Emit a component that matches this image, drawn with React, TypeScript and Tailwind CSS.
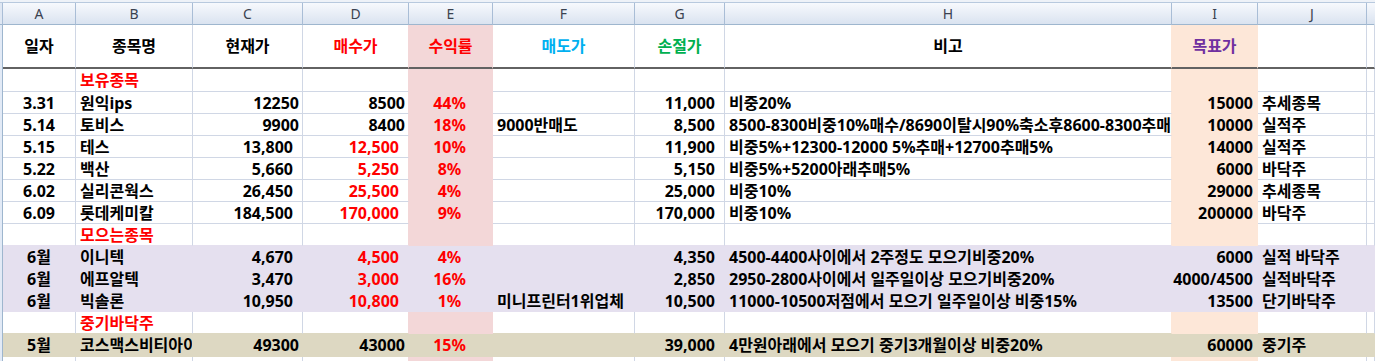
import React from "react";

type Fill = "w" | "p" | "o" | "l" | "t";

const BG: Record<Fill, string> = {
  w: "bg-white",
  p: "bg-[#f3d7d8]",
  o: "bg-[#fde7d8]",
  l: "bg-[#e5e0ef]",
  t: "bg-[#ddd8c2]",
};
const BR: Record<Fill | "g", string> = {
  w: "border-r-white",
  p: "border-r-[#f3d7d8]",
  o: "border-r-[#fde7d8]",
  l: "border-r-[#e5e0ef]",
  t: "border-r-[#ddd8c2]",
  g: "border-r-[#d0d7e5]",
};
const BB: Record<Fill | "g", string> = {
  w: "border-b-white",
  p: "border-b-[#f3d7d8]",
  o: "border-b-[#fde7d8]",
  l: "border-b-[#e5e0ef]",
  t: "border-b-[#ddd8c2]",
  g: "border-b-[#d0d7e5]",
};

const GRID =
  "grid grid-cols-[3px_73px_117px_110px_106px_84px_142px_90px_447px_86px_109px_8px]";

type Row = {
  fill: "w" | "l" | "t";
  h: string;
  section?: string;
  v?: string[];
  dRed?: boolean;
};

const rows: Row[] = [
  { fill: "w", h: "h-[23px]", section: "보유종목" },
  { fill: "w", h: "h-[22px]", v: ["3.31", "원익ips", "12250", "8500", "44%", "", "11,000", "비중20%", "15000", "추세종목"] },
  { fill: "w", h: "h-[22px]", v: ["5.14", "토비스", "9900", "8400", "18%", "9000반매도", "8,500", "8500-8300비중10%매수/8690이탈시90%축소후8600-8300추매", "10000", "실적주"] },
  { fill: "w", h: "h-[22px]", dRed: true, v: ["5.15", "테스", "13,800", "12,500", "10%", "", "11,900", "비중5%+12300-12000 5%추매+12700추매5%", "14000", "실적주"] },
  { fill: "w", h: "h-[22px]", dRed: true, v: ["5.22", "백산", "5,660", "5,250", "8%", "", "5,150", "비중5%+5200아래추매5%", "6000", "바닥주"] },
  { fill: "w", h: "h-[22px]", dRed: true, v: ["6.02", "실리콘웍스", "26,450", "25,500", "4%", "", "25,000", "비중10%", "29000", "추세종목"] },
  { fill: "w", h: "h-[22px]", dRed: true, v: ["6.09", "롯데케미칼", "184,500", "170,000", "9%", "", "170,000", "비중10%", "200000", "바닥주"] },
  { fill: "w", h: "h-[22px]", section: "모으는종목" },
  { fill: "l", h: "h-[22px]", dRed: true, v: ["6월", "이니텍", "4,670", "4,500", "4%", "", "4,350", "4500-4400사이에서 2주정도 모으기비중20%", "6000", "실적 바닥주"] },
  { fill: "l", h: "h-[22px]", dRed: true, v: ["6월", "에프알텍", "3,470", "3,000", "16%", "", "2,850", "2950-2800사이에서 일주일이상 모으기비중20%", "4000/4500", "실적바닥주"] },
  { fill: "l", h: "h-[22px]", dRed: true, v: ["6월", "빅솔론", "10,950", "10,800", "1%", "미니프린터1위업체", "10,500", "11000-10500저점에서 모으기 일주일이상 비중15%", "13500", "단기바닥주"] },
  { fill: "w", h: "h-[22px]", section: "중기바닥주" },
  { fill: "t", h: "h-[23px]", v: ["5월", "코스맥스비티아이", "49300", "43000", "15%", "", "39,000", "4만원아래에서 모으기 중기3개월이상 비중20%", "60000", "중기주"] },
  { fill: "w", h: "h-[22px]", v: ["", "", "", "", "", "", "", "", "", ""] },
];

function fillAt(rowFill: Row["fill"], c: number): Fill {
  if (rowFill !== "w") return rowFill;
  if (c === 5) return "p";
  if (c === 9) return "o";
  return "w";
}

function alignFor(c: number, text: string): string {
  const comma = text.includes(",");
  switch (c) {
    case 1:
      return "justify-center";
    case 2:
    case 6:
    case 8:
    case 10:
      return "justify-start pl-[4px]";
    case 3:
    case 4:
    case 7:
      return comma ? "justify-end pr-[9px]" : "justify-end pr-[3px]";
    case 5:
      return "justify-center pr-[2px]";
    case 9:
      return "justify-end pr-[4px]";
    default:
      return "";
  }
}

function BodyRow({ row, next }: { row: Row; next?: Row }) {
  const cells = [];
  for (let c = 0; c < 12; c++) {
    if (c === 0) {
      cells.push(
        <div key={c} className="border-r border-r-[#9eb6ce] bg-[#e2eaf6]" />
      );
      continue;
    }
    const f = fillAt(row.fill, c);
    const nf = c < 11 ? fillAt(row.fill, c + 1) : "w";
    const rc = f !== "w" ? f : nf !== "w" ? nf : "g";
    const below = next ? fillAt(next.fill, c) : "w";
    const bc = f !== "w" ? f : below !== "w" ? below : "g";
    let text = "";
    let color = "text-black";
    if (row.section) {
      if (c === 2) {
        text = row.section;
        color = "text-[#ff0000]";
      }
    } else if (row.v && c >= 1 && c <= 10) {
      text = row.v[c - 1];
      if (c === 5) color = "text-[#ff0000]";
      if (c === 4 && row.dRed) color = "text-[#ff0000]";
    }
    cells.push(
      <div
        key={c}
        className={`flex items-center overflow-hidden whitespace-nowrap border-r border-b ${BG[f]} ${BR[rc]} ${BB[bc]} ${alignFor(c, text)} ${color}`}
      >
        {text}
      </div>
    );
  }
  return <div className={`${GRID} ${row.h}`}>{cells}</div>;
}

const letters = ["", "A", "B", "C", "D", "E", "F", "G", "H", "I", "J", ""];

const titles: { t: string; cls: string }[] = [
  { t: "", cls: "" },
  { t: "일자", cls: "text-black" },
  { t: "종목명", cls: "text-black" },
  { t: "현재가", cls: "text-black" },
  { t: "매수가", cls: "text-[#ff0000]" },
  { t: "수익률", cls: "text-[#ff0000]" },
  { t: "매도가", cls: "text-[#00b0f0]" },
  { t: "손절가", cls: "text-[#00b050]" },
  { t: "비고", cls: "text-black" },
  { t: "목표가", cls: "text-[#7030a0]" },
  { t: "", cls: "" },
  { t: "", cls: "" },
];

export default function App() {
  return (
    <div className="w-[1375px] h-[361px] overflow-hidden bg-white font-['Noto_Sans','Noto_Sans_CJK_KR',sans-serif] text-[16px] font-bold leading-none">
      <div className="h-[3px] bg-[#eef2f8] border-b border-b-[#b8c9de]" />
      <div className={`${GRID} h-[22px]`}>
        {letters.map((l, i) => (
          <div
            key={i}
            className={`flex items-center justify-center border-b border-b-[#9eb6ce] ${i === 0 ? "bg-[#dfe7f3]" : "bg-gradient-to-b from-[#f7f9fd] to-[#dae3f0]"} border-r ${i === 11 ? "border-r-transparent" : "border-r-[#a9bdd6]"} text-[14px] font-normal text-[#3a4250]`}
          >
            {l}
          </div>
        ))}
      </div>
      <div className={`${GRID} h-[44px]`}>
        {titles.map((t, i) => {
          if (i === 0)
            return (
              <div key={i} className="border-r border-r-[#9eb6ce] bg-[#e2eaf6]" />
            );
          const f = fillAt("w", i);
          const nf = i < 11 ? fillAt("w", i + 1) : "w";
          const rc = f !== "w" ? f : nf !== "w" ? nf : "g";
          return (
            <div
              key={i}
              className={`flex items-center justify-center border-r border-b-2 border-b-[#626262] ${BG[f]} ${BR[rc]} ${t.cls}`}
            >
              {t.t}
            </div>
          );
        })}
      </div>
      {rows.map((r, i) => (
        <BodyRow key={i} row={r} next={rows[i + 1]} />
      ))}
    </div>
  );
}
